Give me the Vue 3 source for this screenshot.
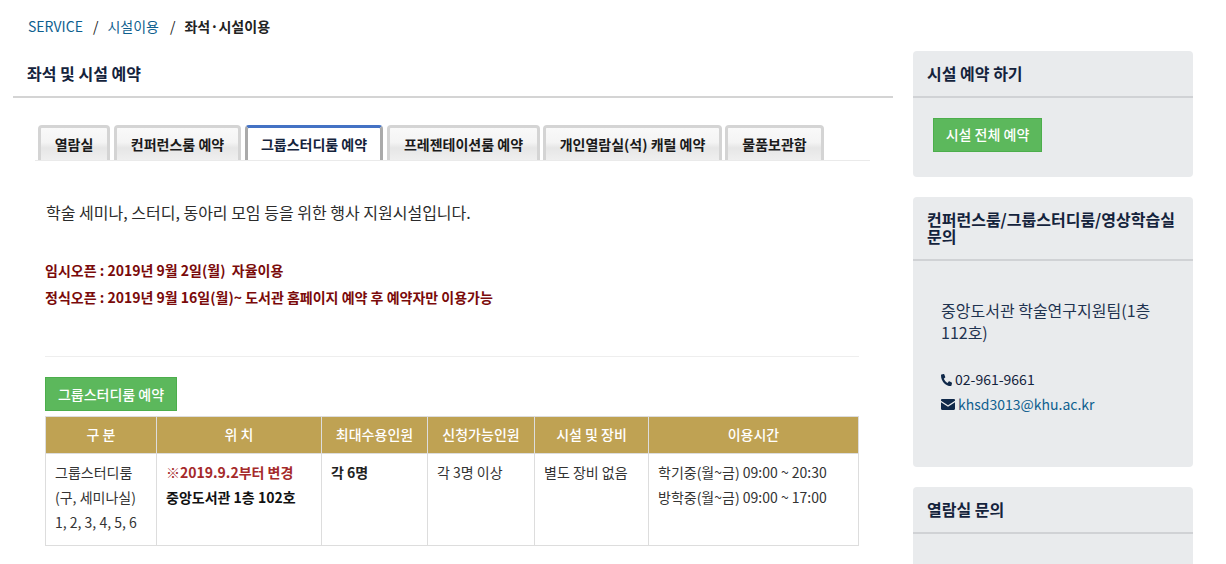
<script setup>
const tabs = [
  { label: '열람실', w: 72 },
  { label: '컨퍼런스룸 예약', w: 127 },
  { label: '그룹스터디룸 예약', w: 138, active: true },
  { label: '프레젠테이션룸 예약', w: 153 },
  { label: '개인열람실(석) 캐럴 예약', w: 179 },
  { label: '물품보관함', w: 99 }
]
</script>

<template>
  <div class="page">
    <nav class="crumbs">
      <a>SERVICE</a><span class="sep">/</span><a>시설이용</a><span class="sep">/</span><b>좌석·시설이용</b>
    </nav>
    <div class="columns">
      <main class="main">
        <h2 class="title">좌석 및 시설 예약</h2>
        <div class="tabs">
          <div
            v-for="t in tabs"
            :key="t.label"
            class="tab"
            :class="{ active: t.active }"
            :style="{ width: t.w + 'px' }"
          >{{ t.label }}</div>
        </div>
        <div class="content">
          <p class="lead">학술 세미나, 스터디, 동아리 모임 등을 위한 행사 지원시설입니다.</p>
          <p class="notice first">임시오픈 : 2019년 9월 2일(월)&nbsp; 자율이용</p>
          <p class="notice">정식오픈 : 2019년 9월 16일(월)~ 도서관 홈페이지 예약 후 예약자만 이용가능</p>
          <hr class="rule" />
          <a class="btn wide">그룹스터디룸 예약</a>
          <table class="info">
            <colgroup>
              <col style="width:111px" /><col style="width:165px" /><col style="width:106px" />
              <col style="width:107px" /><col style="width:114px" /><col style="width:210px" />
            </colgroup>
            <thead>
              <tr>
                <th>구 분</th><th>위 치</th><th>최대수용인원</th><th>신청가능인원</th><th>시설 및 장비</th><th>이용시간</th>
              </tr>
            </thead>
            <tbody>
              <tr>
                <td>그룹스터디룸<br />(구, 세미나실)<br />1, 2, 3, 4, 5, 6</td>
                <td><strong class="red">※2019.9.2부터 변경</strong><br /><strong class="black">중앙도서관 1층 102호</strong></td>
                <td><strong class="dark">각 6명</strong></td>
                <td>각 3명 이상</td>
                <td>별도 장비 없음</td>
                <td>학기중(월~금) 09:00 ~ 20:30<br />방학중(월~금) 09:00 ~ 17:00</td>
              </tr>
            </tbody>
          </table>
        </div>
      </main>
      <aside class="side">
        <section class="card">
          <h3 class="card-head">시설 예약 하기</h3>
          <div class="card-body one"><a class="btn small">시설 전체 예약</a></div>
        </section>
        <section class="card">
          <h3 class="card-head">컨퍼런스룸/그룹스터디룸/영상학습실 문의</h3>
          <div class="card-body two">
            <p class="org">중앙도서관 학술연구지원팀(1층 112호)</p>
            <p class="contact">
              <svg class="ico" viewBox="0 0 512 512" width="11" height="12" preserveAspectRatio="none"><path transform="translate(512,0) scale(-1,1)" fill="#10294a" d="M493.4 24.6l-104-24c-11.3-2.6-22.9 3.3-27.5 13.900l-48 112c-4.200 9.800-1.400 21.300 6.900 28l60.600 49.600c-36 76.700-98.900 140.500-177.200 177.200l-49.600-60.600c-6.800-8.300-18.200-11.100-28-6.900l-112 48C3.900 366.500-2 378.100.6 389.400l24 104C27.100 504.200 36.700 512 48 512c256.100 0 464-207.500 464-464 0-11.200-7.700-20.900-18.600-23.400z"/></svg>
              02-961-9661
            </p>
            <p class="contact mail">
              <svg class="ico" viewBox="0 0 14 11" width="14" height="11"><path fill="#10294a" d="M0 1.200C0 .5.5 0 1.200 0h11.600c.7 0 1.200.5 1.200 1.200v.5L7 6.200 0 1.700ZM0 3.200l7 4.500 7-4.500v6.600c0 .7-.5 1.200-1.200 1.200H1.200C.5 11 0 10.500 0 9.800Z"/></svg>
              <a>khsd3013@khu.ac.kr</a>
            </p>
          </div>
        </section>
        <section class="card">
          <h3 class="card-head">열람실 문의</h3>
          <div class="card-body three"></div>
        </section>
      </aside>
    </div>
  </div>
</template>

<style>
html, body { margin: 0; padding: 0; background: #fff; overflow: hidden; }
</style>

<style scoped>
.page {
  width: 1226px;
  height: 564px;
  overflow: hidden;
  font-family: "Noto Sans CJK KR", "Noto Sans", sans-serif;
  font-size: 14px;
  color: #222;
}
.crumbs {
  padding: 15px 0 0 28px;
  height: 36px;
  line-height: 22px;
  color: #0f5a86;
}
.crumbs a { color: #0f5f8f; }
.crumbs .sep { color: #222; margin: 0 9px 0 10px; }
.crumbs .sep:nth-of-type(2) { margin-left: 11px; margin-right: 9px; }
.crumbs b { color: #222; font-weight: 700; }
.columns { display: flex; align-items: flex-start; padding-left: 13px; gap: 20px; }
.main { width: 880px; flex: none; }
.title {
  margin: 0;
  padding: 0 0 0 14px;
  height: 45px;
  line-height: 45px;
  font-size: 16px;
  font-weight: 700;
  color: #14233c;
  border-bottom: 2px solid #d4d4d4;
}
.tabs {
  display: flex;
  gap: 4px;
  margin: 27px 23px 0 22px;
  padding-left: 3px;
  height: 36px;
  border-bottom: 1px solid #eaeaea;
  box-sizing: border-box;
}
.tab {
  height: 35px;
  box-sizing: border-box;
  flex: none;
  text-align: center;
  border: 3px solid #d4d4d4;
  border-bottom: 0;
  border-radius: 4px 4px 0 0;
  background: linear-gradient(to bottom, #f9f9f9 0%, #f4f4f4 45%, #e6e6e6 62%, #efefef 100%);
  font-size: 14px;
  font-weight: 700;
  line-height: 33px;
  color: #1a1a1a;
  white-space: nowrap;
}
.tab:nth-child(n+5) { margin-left: -1px; }
.tab.active {
  background: #fff;
  border-color: #4472c4 #aaa #aaa;
  color: #14233c;
}
.content { padding: 0 34px 0 32px; }
.lead {
  margin: 0;
  padding: 40px 0 0 1px;
  line-height: 23px;
  font-size: 16px;
  color: #2b2b2b;
}
.notice {
  margin: 0;
  height: 27px;
  line-height: 27px;
  font-size: 14px;
  font-weight: 700;
  color: #7a0a0a;
}
.notice.first { margin-top: 33px; }
.rule {
  margin: 45px 0 20px;
  border: 0;
  border-top: 1px solid #eee;
}
.btn {
  display: inline-block;
  box-sizing: border-box;
  background: #5cb85c;
  border: 1px solid #4cae4c;
  color: #fff;
  font-size: 14px;
  font-weight: 500;
  text-align: center;
  line-height: 32px;
}
.btn.wide { display: block; width: 132px; height: 34px; margin-bottom: 5px; }
.btn.small { width: 109px; height: 34px; line-height: 30px; }
.info {
  width: 813px;
  table-layout: fixed;
  border-collapse: collapse;
  font-size: 14px;
}
.info th, .info td { border: 1px solid #ddd; }
.info th {
  height: 34px;
  padding: 0 0 2px;
  background: #bfa253;
  color: #fff;
  font-weight: 500;
  text-align: center;
}
.info td {
  height: 92px;
  padding: 6px 9px 0;
  vertical-align: top;
  line-height: 25px;
  color: #333;
  box-sizing: border-box;
}
.info .red { color: #a52a2a; font-weight: 700; }
.info .black { color: #111; font-weight: 700; }
.info .dark { color: #222; font-weight: 700; }
.side { width: 280px; flex: none; display: flex; flex-direction: column; gap: 20px; }
.card {
  background: #e9ebed;
  border-radius: 4px;
  overflow: hidden;
}
.card-head {
  margin: 0;
  padding: 14px;
  font-size: 16px;
  font-weight: 700;
  line-height: 17px;
  color: #14233c;
  border-bottom: 2px solid #d0d2d5;
}
.card-body.one { padding: 20px; height: 39px; }
.card-body.two { padding: 38px 28px 0; height: 206px; box-sizing: border-box; color: #14233c; }
.card-body.three { height: 40px; }
.org { margin: 0; font-size: 16px; line-height: 22px; color: #1f3350; }
.contact { margin: 0; font-size: 14px; line-height: 25px; color: #14233c; display: flex; align-items: center; gap: 3px; }
.org + .contact { margin-top: 24px; }
.contact.mail { gap: 3px; }
.contact a { color: #0f5f8f; }
.ico { flex: none; }
</style>
